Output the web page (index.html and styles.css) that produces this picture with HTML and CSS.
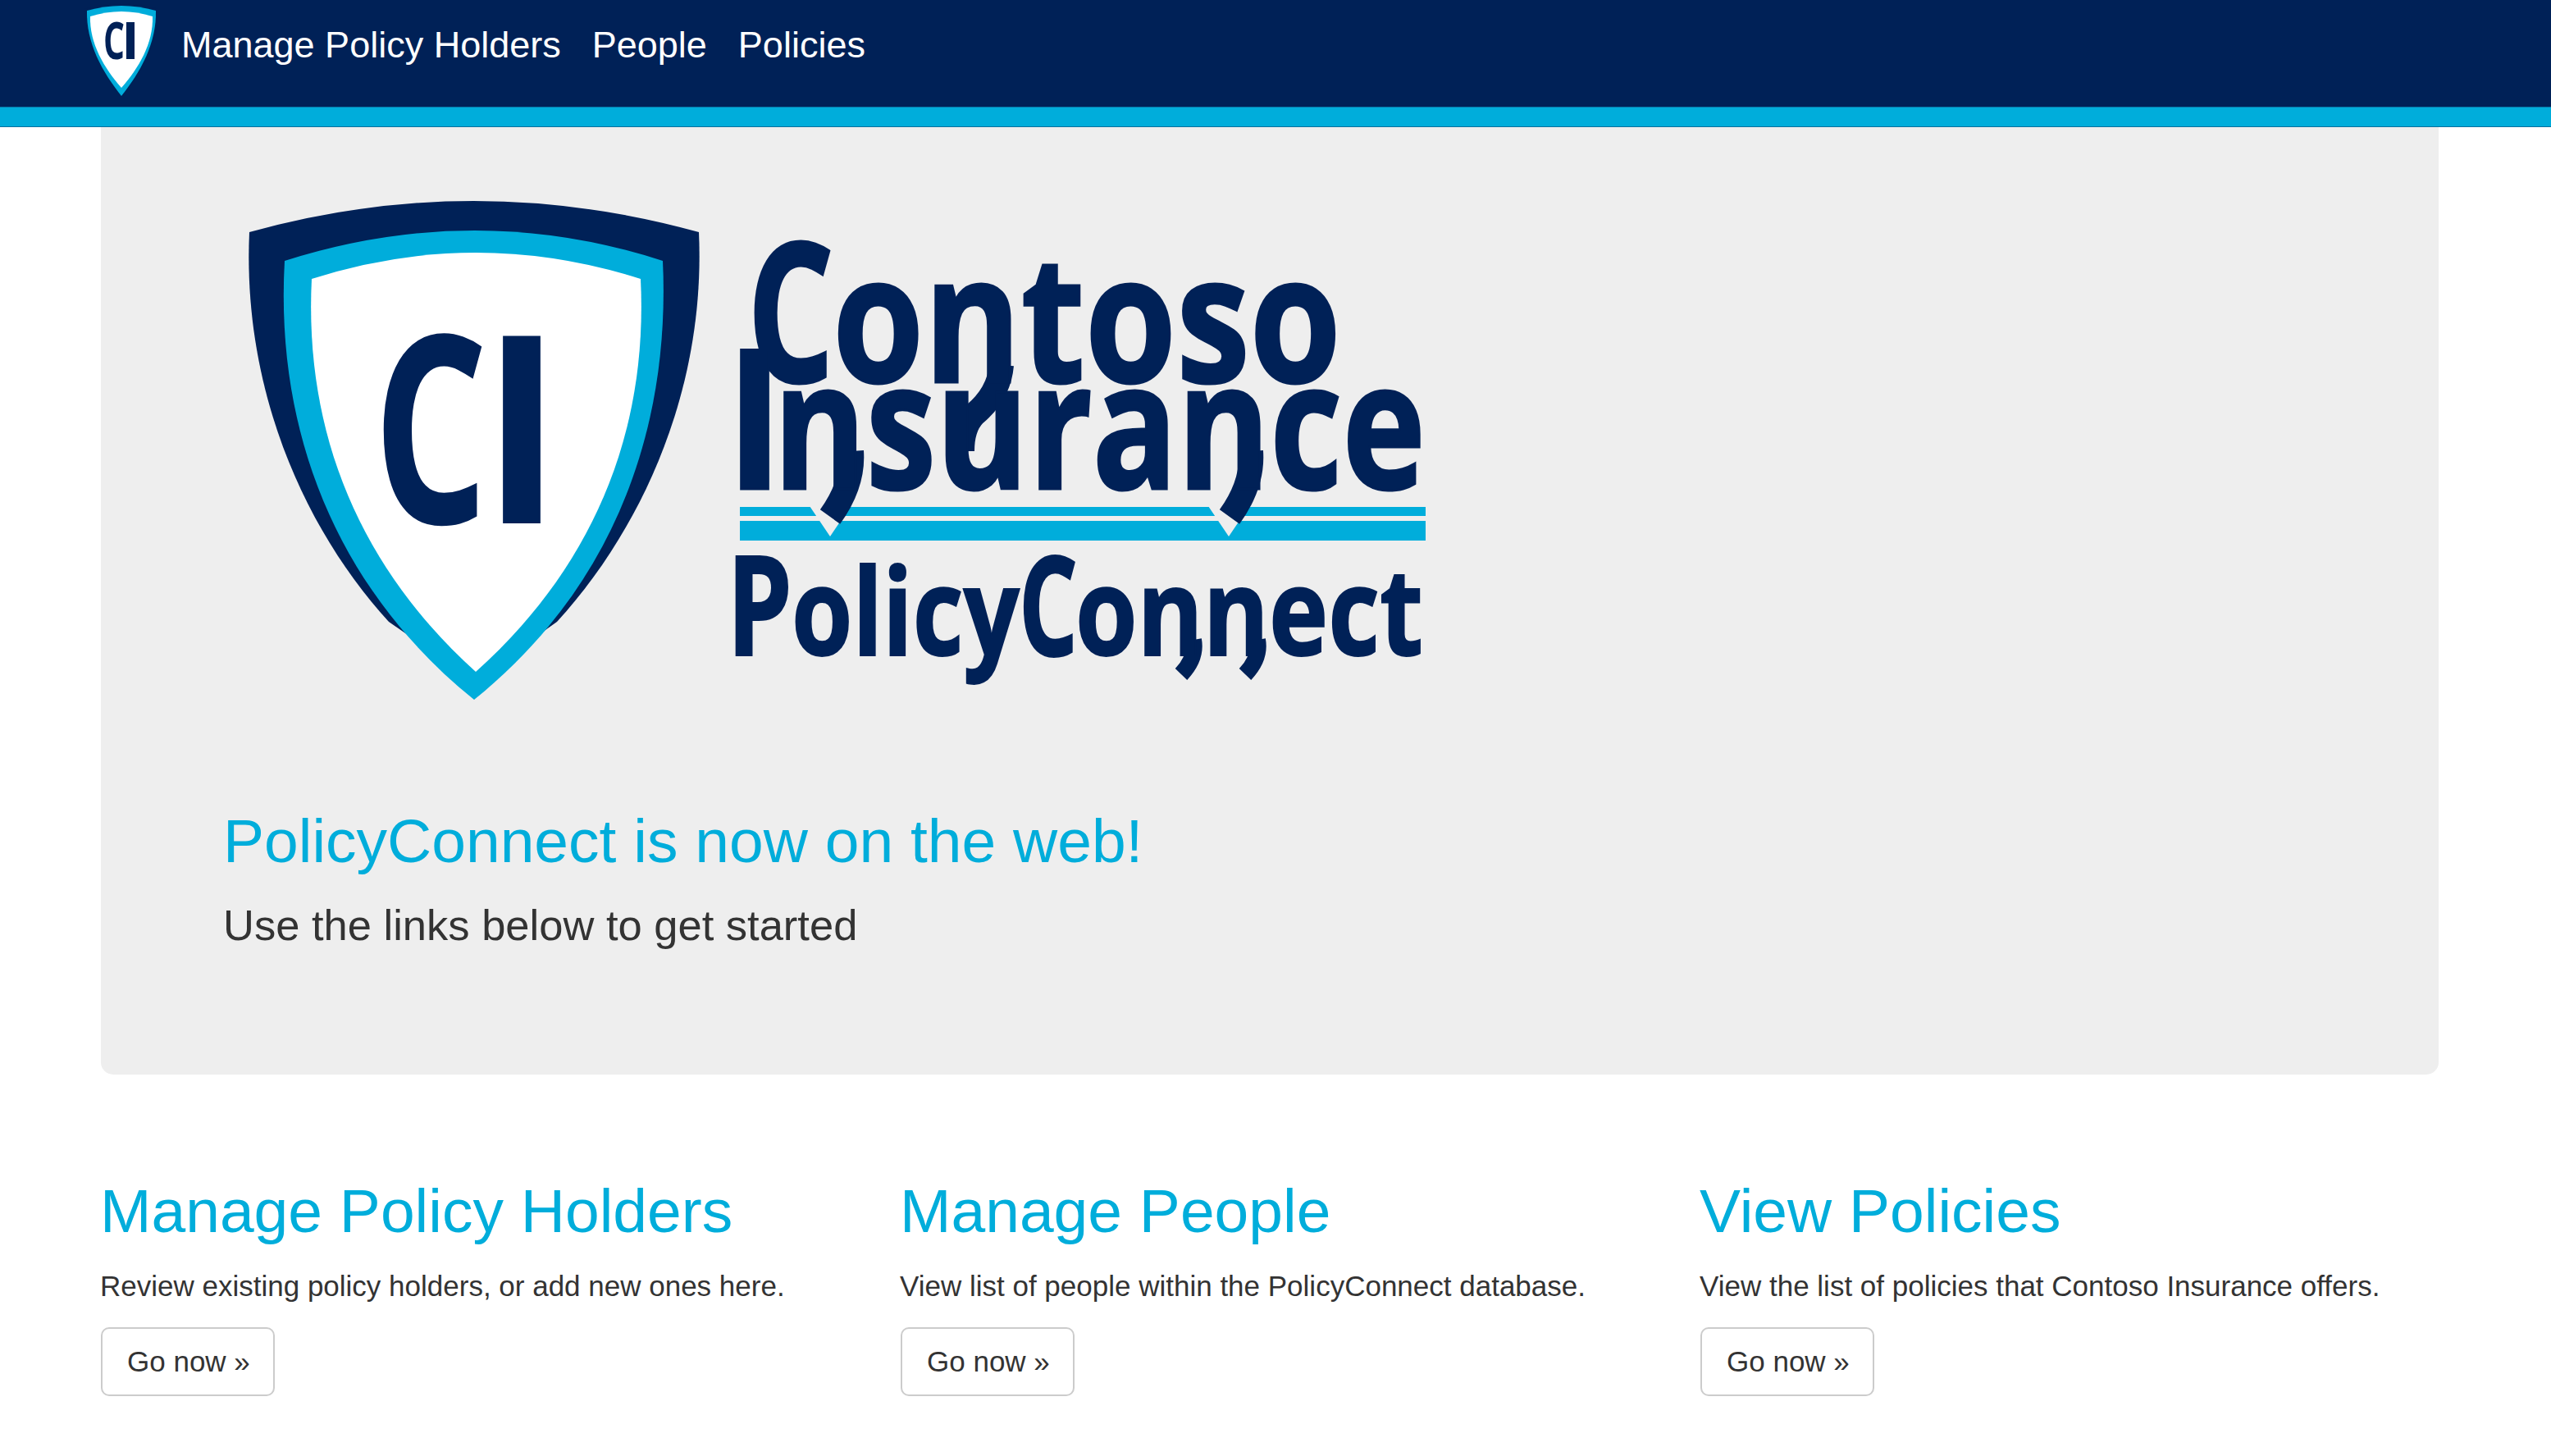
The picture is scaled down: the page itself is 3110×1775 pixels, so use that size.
FILE: index.html
```html
<!DOCTYPE html>
<html>
<head>
  <meta charset="utf-8">
  <title>PolicyConnect</title>
  <link rel="stylesheet" href="styles.css">
</head>
<body>

  <header class="navbar">
    <a href="#" class="brand-logo">
      <svg class="nav-shield" viewBox="0 0 90 114">
        <path class="navy" d="M0 8 Q45 -6 90 8 C91 50 70 85 45 114 C20 85 -1 50 0 8Z"/>
        <path class="cyan" d="M3 10 Q45 -2 87 10 C88 50 68 85 45 114 C22 85 2 50 3 10Z"/>
        <path class="paper" d="M7 17 Q45 5 83 17 C84 50 66 80 45 104 C24 80 6 50 7 17Z"/>
        <text class="mark" y="69"><tspan x="23" textLength="26" lengthAdjust="spacingAndGlyphs">C</tspan><tspan x="45" textLength="22" lengthAdjust="spacingAndGlyphs">I</tspan></text>
      </svg>
    </a>
    <a href="#" class="nav-link">Manage Policy Holders</a>
    <a href="#" class="nav-link">People</a>
    <a href="#" class="nav-link">Policies</a>
  </header>
  <div class="accent-bar"></div>

  <div class="container">
    <div class="jumbotron">
      <!-- coordinates in this drawing are page pixels minus the 273,231 offset -->
      <svg class="logo" viewBox="0 0 1480 640">
        <path class="navy" d="M31 53 Q304 -23 579 53 C588 250 505 420 406 528 L305 600 L201 528 C102 420 22 250 31 53Z"/>
        <path class="cyan" d="M74 88 Q307 14 535 88 C545 300 470 490 305 623 C140 490 62 300 74 88Z"/>
        <path class="paper" d="M107 110 Q307 46 508 110 C518 310 440 470 307 589 C175 470 97 310 107 110Z"/>
        <text class="mark" y="408"><tspan x="182" textLength="140" lengthAdjust="spacingAndGlyphs">C</tspan><tspan x="313" textLength="100" lengthAdjust="spacingAndGlyphs">I</tspan></text>

        <rect class="cyan" x="629" y="388" width="836" height="11"/>
        <rect class="cyan" x="629" y="405" width="836" height="24"/>
        <path class="notch" d="M712 384 L766 384 L739 424Z M1198 384 L1252 384 L1225 424Z"/>
        <path class="tail" d="M765 320 Q768 360 739 400 M1252 320 Q1255 360 1226 400"/>
        <path class="tail" d="M948 215 Q945 250 915 275 Q900 290 900 320"/>
        <path class="tail tail-small" d="M1182 550 Q1186 572 1167 592 M1260 550 Q1264 572 1245 592"/>

        <text class="word" y="236"><tspan x="638" class="word-cap" textLength="106" lengthAdjust="spacingAndGlyphs">C</tspan><tspan x="742" textLength="620" lengthAdjust="spacingAndGlyphs">ontoso</tspan></text>
        <text class="word" y="366"><tspan x="611" class="word-cap" textLength="72" lengthAdjust="spacingAndGlyphs">I</tspan><tspan x="670" textLength="795" lengthAdjust="spacingAndGlyphs">nsurance</tspan></text>
        <text class="word word-small" y="569"><tspan x="613" class="word-small-cap" textLength="80" lengthAdjust="spacingAndGlyphs">P</tspan><tspan x="692" textLength="278" lengthAdjust="spacingAndGlyphs">olicy</tspan><tspan x="969" class="word-small-cap" textLength="72" lengthAdjust="spacingAndGlyphs">C</tspan><tspan x="1038" textLength="424" lengthAdjust="spacingAndGlyphs">onnect</tspan></text>
      </svg>
      <h1>PolicyConnect is now on the web!</h1>
      <p>Use the links below to get started</p>
    </div>

    <div class="row">
      <div class="col">
        <h2>Manage Policy Holders</h2>
        <p>Review existing policy holders, or add new ones here.</p>
        <a href="#" class="btn">Go now &raquo;</a>
      </div>
      <div class="col">
        <h2>Manage People</h2>
        <p>View list of people within the PolicyConnect database.</p>
        <a href="#" class="btn">Go now &raquo;</a>
      </div>
      <div class="col">
        <h2>View Policies</h2>
        <p>View the list of policies that Contoso Insurance offers.</p>
        <a href="#" class="btn">Go now &raquo;</a>
      </div>
    </div>
  </div>

</body>
</html>
```

FILE: styles.css
```css
body {
  margin: 0;
  padding-right: 14px;
  font-family: "Liberation Sans", Arial, sans-serif;
  font-size: 35px;
  line-height: 50px;
  color: #333;
  background-color: #fff;
  overflow: hidden;
}

a {
  text-decoration: none;
}

/* top bar */
.navbar {
  display: flex;
  align-items: flex-start;
  height: 130px;
  margin-right: -14px;
  padding-left: 103px;
  background-color: #002157;
}

.brand-logo {
  display: block;
  height: 114px;
  margin-top: 3px;
  margin-right: 28px;
}

.nav-shield {
  display: block;
  width: 90px;
  height: 114px;
  overflow: visible;
}

.nav-link {
  margin-top: 29px;
  margin-right: 38px;
  color: #fff;
  font-size: 45px;
  line-height: 52px;
}

.accent-bar {
  height: 23px;
  margin-right: -14px;
  background-color: #00addb;
  border-top: 1px solid #0a6f9e;
  border-bottom: 1px solid #0a6f9e;
}

/* shared logo colours */
.navy {
  fill: #002157;
}

.cyan {
  fill: #00addb;
}

.paper {
  fill: #fff;
}

.notch {
  fill: #eee;
}

.tail {
  fill: none;
  stroke: #002157;
  stroke-width: 30;
}

.tail-small {
  stroke-width: 20;
}

.mark {
  fill: #002157;
  font-family: "Open Sans", sans-serif;
  font-weight: 700;
  font-size: 320px;
}

.nav-shield .mark {
  font-size: 62px;
}

.word {
  fill: #002157;
  stroke: #002157;
  stroke-width: 3;
  font-family: "Open Sans", sans-serif;
  font-weight: 700;
  font-size: 215px;
}

.word-cap {
  font-size: 238px;
}

.word-small {
  font-size: 148px;
  stroke-width: 2;
}

.word-small-cap {
  font-size: 168px;
}

/* page body */
.container {
  width: 2925px;
  margin: 0 auto;
  padding: 0 37.5px;
  box-sizing: border-box;
}

.jumbotron {
  height: 1155px;
  padding: 75px 150px 0;
  box-sizing: border-box;
  background-color: #eee;
  border-radius: 0 0 15px 15px;
  margin-bottom: 75px;
}

.logo {
  display: block;
  width: 1480px;
  height: 640px;
}

.jumbotron h1 {
  margin: 106px 0 0 -1px;
  font-size: 75px;
  font-weight: 400;
  line-height: 99px;
  color: #00addb;
}

.jumbotron p {
  margin: 15px 0 0 -1px;
  font-size: 52.5px;
  line-height: 75px;
}

.row {
  display: grid;
  grid-template-columns: repeat(3, 975px);
  margin-right: -75px;
}

.col {
  padding-right: 37.5px;
}

.col h2 {
  margin: 50px 0 25px -1px;
  font-size: 75px;
  font-weight: 400;
  line-height: 82.5px;
  color: #00addb;
}

.col p {
  margin: 0 0 25px -1px;
}

.btn {
  display: inline-block;
  padding: 15px 28px 15px 30px;
  color: #333;
  background-color: #fff;
  border: 2.5px solid #ccc;
  border-radius: 10px;
}
```
